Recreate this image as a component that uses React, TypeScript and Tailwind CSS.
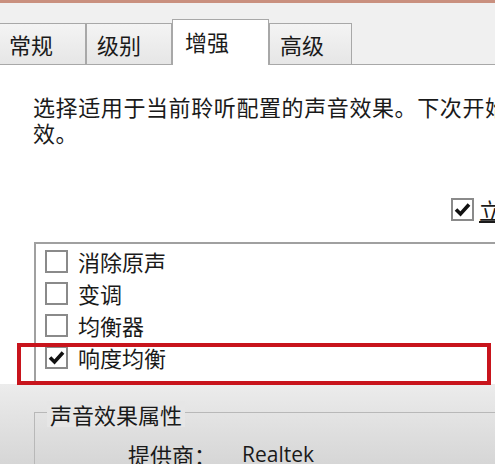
import React from "react";

const Box = ({ checked }: { checked?: boolean }) => (
  <div className="w-[23px] h-[23px] border-2 border-[#8a8a8a] bg-white flex items-center justify-center shrink-0">
    {checked && (
      <svg width="17" height="15" viewBox="0 0 17 15">
        <path d="M2 7.5 L6.5 12 L15 2.5" fill="none" stroke="#111" strokeWidth="3.6" strokeLinejoin="miter" />
      </svg>
    )}
  </div>
);

const Tab = ({ label, w, selected }: { label: string; w: string; selected?: boolean }) =>
  selected ? (
    <div className={`${w} h-[46px] bg-white border border-[#a8a8a8] border-b-0 -mb-px relative z-10 flex items-start pt-[8px] pl-[12px]`}>
      <span>{label}</span>
    </div>
  ) : (
    <div className={`${w} h-[41px] bg-gradient-to-b from-[#f4f4f4] to-[#e6e6e6] border border-[#a8a8a8] border-b-0 flex items-start pt-[7px] pl-[10px]`}>
      <span>{label}</span>
    </div>
  );

export default function App() {
  const font = { fontFamily: '"Noto Sans CJK SC", "Noto Sans", sans-serif' };
  return (
    <div className="w-[495px] h-[464px] overflow-hidden relative bg-white text-[#1a1a1a]" style={font}>
      <div className="h-[3px] bg-[#c9907f]" />
      <div className="h-[62px] bg-[#f0f0f0] flex items-end border-b border-[#a8a8a8] text-[22px] leading-[26px] pl-0">
        <div className="-ml-[2px] flex items-end">
          <Tab label="常规" w="w-[88px]" />
          <Tab label="级别" w="w-[86px]" />
          <Tab label="增强" w="w-[97px]" selected />
          <Tab label="高级" w="w-[83px]" />
        </div>
      </div>
      <div className="pl-[33px] pt-[28px] text-[22px] leading-[26px] tracking-[0.6px] whitespace-nowrap">
        <div>选择适用于当前聆听配置的声音效果。下次开始播放时将生</div>
        <div>效。</div>
      </div>
      <div className="flex items-center pl-[451px] mt-[52px] h-[24px] whitespace-nowrap text-[22px]">
        <Box checked />
        <span className="ml-[5px] underline">立即模式</span>
      </div>
      <div className="mt-[21px] ml-[34px] h-[142px] border-t-2 border-l-2 border-[#a0a0a0] pt-[1px] pl-[9px] text-[22px] leading-[26px]">
        {[
          ["消除原声", false],
          ["变调", false],
          ["均衡器", false],
          ["响度均衡", true],
        ].map(([t, c]) => (
          <div key={t as string} className="flex items-center h-[32px]">
            <Box checked={c as boolean} />
            <span className="ml-[10px]">{t as string}</span>
          </div>
        ))}
      </div>
      <div className="h-[80px] bg-gradient-to-b from-[#ececec] to-[#d6d6d6] pt-[28px] pl-[34px]">
        <div className="relative h-[60px] border-t border-l border-[#b8b8b8]">
          <div className="absolute -top-[12px] left-[12px] px-[3px] bg-[#e6e6e6] text-[22px] leading-[26px]">声音效果属性</div>
          <div className="flex pt-[28px] text-[22px] leading-[26px]">
            <span className="ml-[93px]">提供商：</span>
            <span className="ml-[26px] text-[21px]" style={{ fontFamily: '"Open Sans", "Noto Sans", sans-serif' }}>Realtek</span>
          </div>
        </div>
      </div>
      <div className="absolute left-[17px] top-[343px] w-[474px] h-[42px] border-[4px] border-[#c8141c]" />
    </div>
  );
}
